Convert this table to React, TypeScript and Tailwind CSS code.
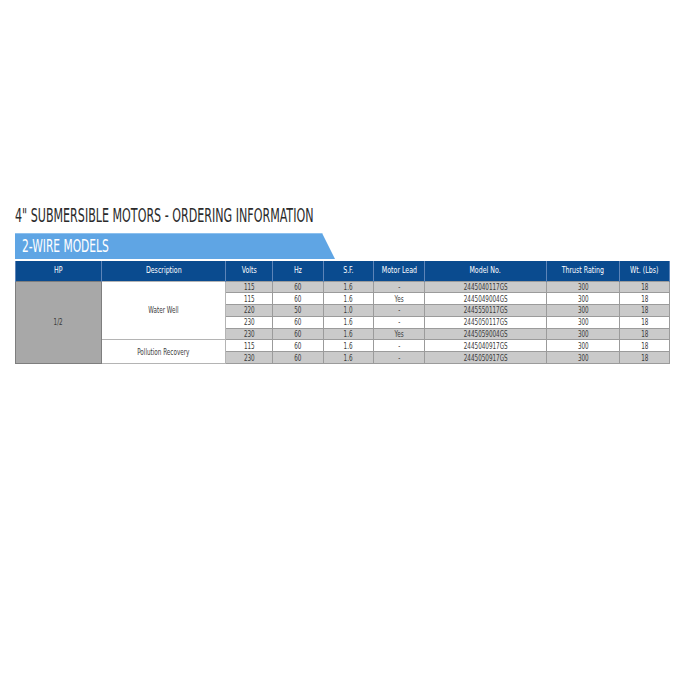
const rows = [
  { v: "115", hz: "60", sf: "1.6", ml: "-", model: "2445040117GS" },
  { v: "115", hz: "60", sf: "1.6", ml: "Yes", model: "2445049004GS" },
  { v: "220", hz: "50", sf: "1.0", ml: "-", model: "2445550117GS" },
  { v: "230", hz: "60", sf: "1.6", ml: "-", model: "2445050117GS" },
  { v: "230", hz: "60", sf: "1.6", ml: "Yes", model: "2445059004GS" },
  { v: "115", hz: "60", sf: "1.6", ml: "-", model: "2445040917GS" },
  { v: "230", hz: "60", sf: "1.6", ml: "-", model: "2445050917GS" },
];

const headers = [
  { label: "HP", w: "w-[86px]" },
  { label: "Description", w: "w-[124px]" },
  { label: "Volts", w: "w-[47px]" },
  { label: "Hz", w: "w-[51px]" },
  { label: "S.F.", w: "w-[50px]" },
  { label: "Motor Lead", w: "w-[51px]" },
  { label: "Model No.", w: "w-[122px]" },
  { label: "Thrust Rating", w: "w-[73px]" },
  { label: "Wt. (Lbs)", w: "w-[50px]" },
];

function T({ children }: { children: React.ReactNode }) {
  return <span className="inline-block scale-x-[0.74] whitespace-nowrap">{children}</span>;
}

export default function App() {
  const cell = "border border-[#9b9b9b] text-center align-middle p-0";
  return (
    <div className="w-[700px] h-[700px] bg-white pt-[203px] pl-[15px] font-['DejaVu_Sans_Condensed','DejaVu_Sans',sans-serif] font-stretch-condensed">
      <h1 className="text-[19px] leading-[24px] text-[#2b2b2b] origin-left scale-x-[0.65] whitespace-nowrap">
        4" SUBMERSIBLE MOTORS - ORDERING INFORMATION
      </h1>
      <div className="mt-[6px] w-[320px] h-[26px] bg-[#5fa5e4] [clip-path:polygon(0_0,307px_0,320px_100%,0_100%)] pl-[7px] border-t border-[#8cc0ee]">
        <span className="inline-block text-[18px] leading-[24px] text-white origin-left scale-x-[0.66] whitespace-nowrap">
          2-WIRE MODELS
        </span>
      </div>
      <table className="mt-[2px] border-collapse table-fixed w-[654px] text-[8.5px] text-[#3a3a3a]">
        <thead>
          <tr className="h-[20px] bg-[#0a4b8f] text-white">
            {headers.map((h) => (
              <th key={h.label} className={`${h.w} font-normal text-center border-x border-[#5d84b8] p-0`}>
                <span className="inline-block scale-x-[0.82] whitespace-nowrap">{h.label}</span>
              </th>
            ))}
          </tr>
        </thead>
        <tbody>
          {rows.map((r, i) => {
            const bg = i % 2 === 0 ? "bg-[#cacaca]" : "bg-white";
            return (
              <tr key={i} className="h-[11.8px] leading-[10px]">
                {i === 0 && (
                  <td rowSpan={7} className="bg-[#a8a8a8] border border-[#7e7e7e] text-center align-middle p-0">
                    <T>1/2</T>
                  </td>
                )}
                {i === 0 && (
                  <td rowSpan={5} className="bg-white border border-[#b4b4b4] text-center align-middle p-0">
                    <T>Water Well</T>
                  </td>
                )}
                {i === 5 && (
                  <td rowSpan={2} className="bg-white border border-[#b4b4b4] text-center align-middle p-0">
                    <T>Pollution Recovery</T>
                  </td>
                )}
                <td className={`${cell} ${bg}`}><T>{r.v}</T></td>
                <td className={`${cell} ${bg}`}><T>{r.hz}</T></td>
                <td className={`${cell} ${bg}`}><T>{r.sf}</T></td>
                <td className={`${cell} ${bg}`}><T>{r.ml}</T></td>
                <td className={`${cell} ${bg}`}><T>{r.model}</T></td>
                <td className={`${cell} ${bg}`}><T>300</T></td>
                <td className={`${cell} ${bg}`}><T>18</T></td>
              </tr>
            );
          })}
        </tbody>
      </table>
    </div>
  );
}
